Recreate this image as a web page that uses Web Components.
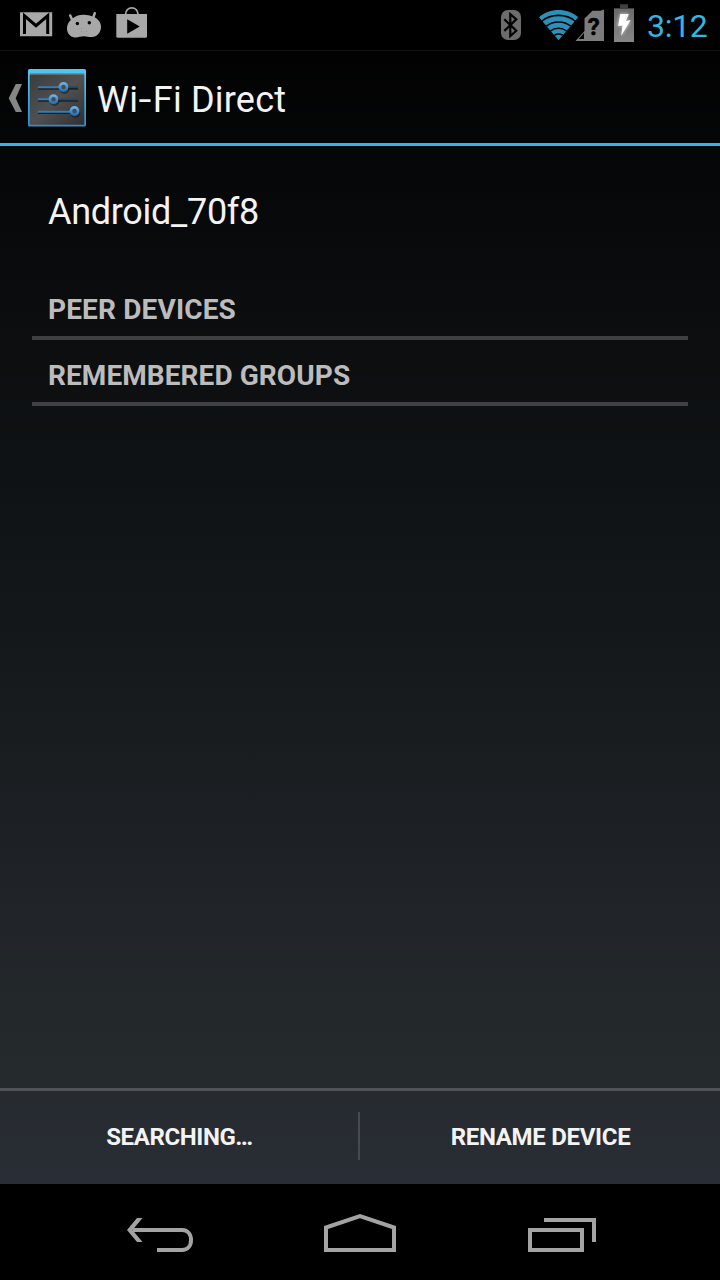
<!DOCTYPE html>
<html lang="en">
<head>
<meta charset="utf-8">
<title>Wi-Fi Direct</title>
<style>
  html, body { margin: 0; background: #000; }
  body { font-family: Roboto, "Liberation Sans", sans-serif; color: #f3f3f3; }
</style>
</head>
<body>
<wifi-direct-screen></wifi-direct-screen>
<script>
const define = (name, html) => {
  const template = document.createElement('template');
  template.innerHTML = html;
  customElements.define(name, class extends HTMLElement {
    constructor() {
      super();
      this.attachShadow({ mode: 'open' }).append(template.content.cloneNode(true));
    }
  });
};

define('status-bar', `
<style>
  :host { display: flex; justify-content: space-between; height: 50px; background: #000; border-bottom: 1px solid #111; }
  svg { display: block; flex: none; }
  .group { display: flex; }
  time { font-size: 32px; line-height: 53px; color: #33b5e5; margin-left: 12px; width: 73px; letter-spacing: -.3px; white-space: nowrap; }
</style>
<div class="group">
  <svg width="56" height="50" viewBox="0 0 56 50">
    <path fill="#a8a8a8" d="M20 12.3h32.2v24H20z"/>
    <path fill="none" stroke="#000" stroke-width="3" d="M24.5 34V15.8L36 25.7l11.7-9.9V34"/>
  </svg>
  <svg width="50" height="50" viewBox="56 0 50 50">
    <path fill="none" stroke="#a8a8a8" stroke-width="2.6" stroke-linecap="round" d="M70.200 15.500l2.300 5M94.700 13.300l-1.700 5"/>
    <path fill="#a8a8a8" d="M72 19c3-3 8-4.500 12-4.200 3 .1 6 .6 8.500 1.700 5 1.500 8.500 5.500 8.500 10.300 0 6-4 10-9 10.300-3 .2-5-.9-8-.9-3.500 0-6 1.500-9.500 1.200C70 37 67 33 67 28.500c0-4 1.500-7 5-9.500z"/>
    <circle cx="77.400" cy="23.500" r="1.700"/><circle cx="89.300" cy="22.700" r="1.700"/>
    <path fill="#8c8c8c" d="M81 28h1v1h-1zM86 31h1v1h-1zM81 31h1v1h-1z"/>
  </svg>
  <svg width="50" height="50" viewBox="106 0 50 50">
    <path fill="#a8a8a8" d="M116.300 14H147v22.300q0 1.500-1.500 1.500h-27.700q-1.500 0-1.500-1.500z"/>
    <path fill="none" stroke="#a8a8a8" stroke-width="1.800" d="M125.500 14.500c.3-4 3-6.700 6.300-6.700s6 2.700 6.300 6.700"/>
    <path d="M127.200 19.200v14.500l12.500-7.200z"/>
  </svg>
</div>
<div class="group">
  <svg width="36" height="50" viewBox="493 0 36 50">
    <rect x="501" y="10" width="20" height="30" rx="7" fill="#6c6c6c"/>
    <path fill="none" stroke="#000" stroke-width="2.200" d="M504.300 19.200l12 11.500-6 5.300V14.200l6 5.200-12 11.500"/>
  </svg>
  <svg width="81" height="50" viewBox="529 0 81 50">
    <path fill="#2991ba" d="M539 17.200c11-9.500 28-9.500 39.200 0l-19.600 23.100z"/>
    <path fill="none" stroke="#000" stroke-width="1.600" d="M541.500 21.500c9.500-8.200 24.500-8.200 34.200 0M546.300 26.200c7-5.600 17.500-5.600 24.500 0M550.500 30.800c4.800-3.400 11.200-3.400 16 0M554.500 35.200c2.500-1.500 5.600-1.500 8.200 0"/>
    <path fill="#7c7c7c" d="M604 9.500V41h-28.500l9-10V18.500l8-7.700h8z"/>
    <path d="M584 33v6h-5.300z"/>
    <text x="593.800" y="34.700" text-anchor="middle" font-family="Roboto, sans-serif" font-size="24" font-weight="700" stroke="#000" stroke-width=".5">?</text>
  </svg>
  <svg width="25" height="50" viewBox="610 0 25 50">
    <defs><linearGradient id="charge" x2="0" y2="1"><stop stop-color="#6a6a6a"/><stop offset="1" stop-color="#868686"/></linearGradient>
    <filter id="glow" x="-50%" y="-30%" width="200%" height="160%"><feGaussianBlur stdDeviation="1.500"/></filter></defs>
    <path fill="#404040" d="M620 4.200h8V8h6v1.500h-20V8h6z"/>
    <path fill="url(#charge)" d="M614 9h20v33h-20z"/>
    <path fill="#ddd" opacity=".7" filter="url(#glow)" d="M620 13.500h8.500l-2 8h4.500l-10 15 1.500-10.500H617z"/>
    <path fill="#fff" d="M620.300 14h8.500l-2.800 7 4.700-1-9.500 15.700 1.300-10.200-4.300.6z"/>
  </svg>
  <time>3:12</time>
</div>`);

define('action-bar', `
<style>
  :host { display: flex; height: 92px; border-bottom: 3px solid #33b5e5; }
  svg { display: block; flex: none; }
  h1 { margin: 0; font-size: 36px; font-weight: 400; line-height: 99px; margin-left: 1px; white-space: nowrap; letter-spacing: .2px; }
</style>
<svg width="96" height="92" viewBox="0 51 96 92">
  <defs>
    <linearGradient id="face" x2="1" y2="1"><stop stop-color="#393d3f"/><stop offset=".5" stop-color="#505050"/><stop offset="1" stop-color="#303030"/></linearGradient>
    <linearGradient id="edge" x2="0" y2="1"><stop stop-color="#4bcaf3"/><stop offset="1" stop-color="#318bd8"/></linearGradient>
    <linearGradient id="knob" x2="0" y2="1"><stop stop-color="#6aaee2"/><stop offset="1" stop-color="#1e74c5"/></linearGradient>
  </defs>
  <path fill="#858585" d="M15.800 84H22l-6.300 14.200L22 112h-6.200L8.700 98.200z"/>
  <rect x="28" y="69" width="58" height="57.500" rx="1.500" fill="url(#edge)"/>
  <path fill="#777" d="M30 73.300h54v2H30z"/>
  <path fill="url(#face)" d="M29.700 74.800h54.600v50H29.700z"/>
  <path fill="#222" d="M38 87.500h40v2.300H38zM38 99.500h40v2.300H38zM38 111.800h40v2.300H38z"/>
  <path fill="none" stroke="#347eb6" stroke-width="2" d="M38 87.300h23M38 99.300h12M38 111.700h33"/>
  <path fill="none" stroke="#264964" stroke-width="1.700" d="M66 87h12M57 99.300h21"/>
  <g opacity=".5" fill="#151515"><circle cx="64.500" cy="89" r="5"/><circle cx="54.500" cy="101" r="5"/><circle cx="75.500" cy="113" r="5"/></g>
  <g fill="#4a4a4a" stroke="url(#knob)" stroke-width="2.700"><circle cx="63.500" cy="87" r="3.600"/><circle cx="53.500" cy="99.300" r="3.600"/><circle cx="74.500" cy="111" r="3.600"/></g>
</svg>
<h1><slot></slot></h1>`);

define('device-name', `
<style>
  :host { display: block; height: 128px; padding-left: 48px; font-size: 36px; line-height: 133px; white-space: nowrap; letter-spacing: -.3px; }
</style>
<slot></slot>`);

define('list-heading', `
<style>
  :host { display: block; height: 62px; margin: 0 32px; padding-left: 16px; border-bottom: 4px solid #3e4042; }
  h2 { margin: 0; font-size: 28px; font-weight: 700; line-height: 72px; color: #bcbcbc; white-space: nowrap; letter-spacing: var(--tracking, 0); }
</style>
<h2><slot></slot></h2>`);

define('bottom-bar', `
<style>
  :host { display: flex; align-items: center; height: 93px; border-top: 3px solid #505457; background: linear-gradient(#262b30, #292d35); }
  i { width: 2px; height: 48px; margin: -3px 1px 0 -1px; background: #474b50; }
</style>
<slot name="first"></slot><i></i><slot name="second"></slot>`);

define('bar-button', `
<style>
  :host { display: block; flex: 1; text-align: center; font-size: 24px; font-weight: 700; line-height: 93px; height: 93px; white-space: nowrap; letter-spacing: var(--tracking, 0); }
</style>
<slot></slot>`);

define('nav-bar', `
<style>
  :host { display: grid; grid-template-columns: 1fr 72px 1fr; height: 96px; background: #000; }
  svg { display: block; fill: none; stroke: #a3a3a3; stroke-width: 4; }
</style>
<svg width="324" height="96" viewBox="0 1184 324 96">
  <path d="M133 1230h49c5.500 0 9 4 9 10s-3.500 10-9 10h-25"/>
  <path fill="#a3a3a3" stroke="none" d="M137 1218h5.500l-10 12 10 12H137l-10-12z"/>
</svg>
<svg width="72" height="96" viewBox="324 1184 72 96"><path d="M326 1250v-22.500l34-11.300 34 11.300V1250z"/></svg>
<svg width="324" height="96" viewBox="396 1184 324 96"><path d="M530 1230h52v20h-52zM544 1220h50v22"/></svg>`);

define('wifi-direct-screen', `
<style>
  :host { display: grid; grid-template-rows: auto 1fr auto; width: 720px; height: 1280px; overflow: hidden; }
  main { display: flex; flex-direction: column; margin-top: -51px; padding-top: 51px;
    background: linear-gradient(#000 0, #0b0d0f 320px, #14181a 640px, #202428 900px, #252b2d 1088px, #292d35 1184px); }
  status-bar { z-index: 1; }
  .grow { flex: 1; }
  .hyphen { display: inline-block; transform: scaleX(1.3); margin: 0 2.300px; }
  .peers { --tracking: .15px; }
  .groups { --tracking: .07px; }
  .searching { --tracking: -.4px; }
  .rename { --tracking: -.3px; }
</style>
<status-bar></status-bar>
<main>
  <action-bar>Wi<span class="hyphen">-</span>Fi Direct</action-bar>
  <device-name>Android_70f8</device-name>
  <list-heading class="peers">PEER DEVICES</list-heading>
  <list-heading class="groups">REMEMBERED GROUPS</list-heading>
  <div class="grow"></div>
  <bottom-bar>
    <bar-button class="searching" slot="first">SEARCHING…</bar-button>
    <bar-button class="rename" slot="second">RENAME DEVICE</bar-button>
  </bottom-bar>
</main>
<nav-bar></nav-bar>`);
</script>
</body>
</html>
